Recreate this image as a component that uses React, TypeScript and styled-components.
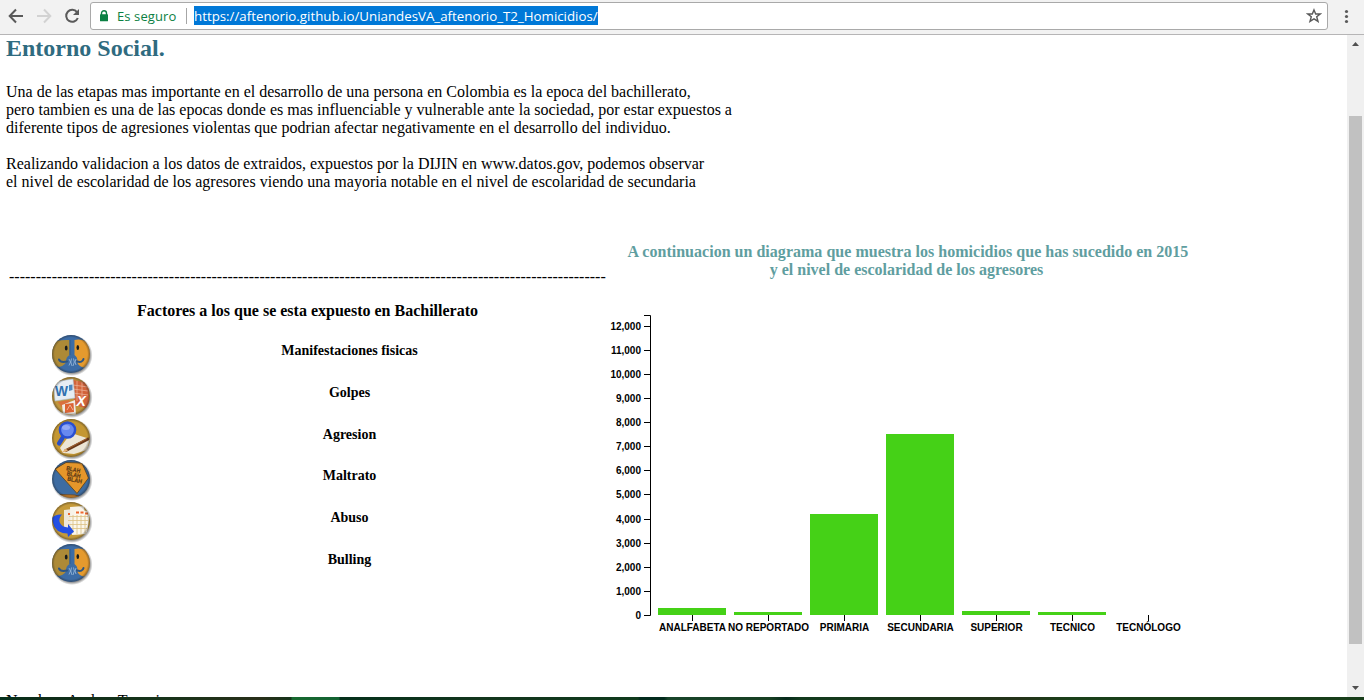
import React from "react";
import styled, { createGlobalStyle } from "styled-components";

const GlobalStyle = createGlobalStyle`
  * { box-sizing: border-box; }
  body { margin: 0; background: #fff; overflow: hidden; }
`;

const Window = styled.div`
  width: 1364px;
  height: 700px;
  display: flex;
  flex-direction: column;
  background: #fff;
  overflow: hidden;
`;

const Toolbar = styled.header`
  height: 35px;
  flex: none;
  display: flex;
  align-items: flex-start;
  background: #f2f2f2;
  border-bottom: 1px solid #b6b5b6;
`;

const NavIcons = styled.svg`
  width: 90px;
  height: 34px;
  flex: none;
`;

const AddressBar = styled.div`
  width: 1238px;
  height: 28px;
  margin-top: 2px;
  flex: none;
  display: flex;
  align-items: center;
  background: #fff;
  border: 1px solid #a9a9a9;
  border-radius: 3px;
  padding-left: 8px;
  font-family: "Open Sans", "Noto Sans", sans-serif;
  font-size: 13px;
`;

const LockIcon = styled.svg`
  width: 10px;
  height: 14px;
  flex: none;
`;

const Secure = styled.span`
  width: 60px;
  margin-left: 8px;
  color: #0b8043;
  line-height: 18px;
  white-space: nowrap;
  letter-spacing: 0.1px;
`;

const Divider = styled.span`
  width: 1px;
  height: 16px;
  margin-left: 9px;
  background: #a6a6a6;
`;

const Url = styled.span`
  width: 404px;
  height: 19px;
  margin-left: 7px;
  margin-top: -1px;
  line-height: 20px;
  background: #0078d7;
  color: #fff;
  white-space: nowrap;
  font-size: 13.3px;
`;

const StarIcon = styled.svg`
  width: 16px;
  height: 16px;
  margin-left: auto;
  margin-right: 5px;
`;

const MenuIcon = styled.svg`
  width: 36px;
  height: 34px;
`;

const Viewport = styled.div`
  height: 662px;
  flex: none;
  display: flex;
`;

const Page = styled.main`
  width: 1347px;
  height: 662px;
  overflow: hidden;
  padding: 0 6px;
  font-family: "Liberation Serif", "Times New Roman", serif;
  font-size: 16px;
  line-height: 18px;
  color: #000;
`;

const Title = styled.h2`
  margin: 0;
  font-size: 24px;
  line-height: 27px;
  color: #2f6b80;
`;

const Intro = styled.div`
  margin-top: 21px;
  height: 108px;
`;

const Line = styled.div<{ $track?: number }>`
  height: 18px;
  white-space: nowrap;
  letter-spacing: ${(p) => p.$track ?? 0}px;
`;

const Columns = styled.div`
  display: flex;
  margin-top: 52px;
  height: 449px;
`;

const Factors = styled.section`
  width: 600px;
  flex: none;
`;

const Rule = styled.div`
  height: 18px;
  margin: 25px 0 0 3px;
  white-space: nowrap;
  overflow: hidden;
`;

const FactorsTitle = styled.h4`
  width: 595px;
  margin: 16px 0 0 4px;
  height: 18px;
  text-align: center;
`;

const FactorList = styled.div`
  margin-top: 14px;
  padding-left: 45px;
`;

const Factor = styled.div`
  display: flex;
  height: 41.8px;
`;

const Badge = styled.svg`
  width: 42px;
  height: 42px;
  flex: none;
`;

const FactorName = styled.div`
  width: 516px;
  padding-top: 9px;
  text-align: center;
  font-size: 14px;
  font-weight: bold;
  line-height: 16px;
`;

const ChartSection = styled.section`
  width: 600px;
`;

const ChartTitle = styled.h4`
  margin: 0 0 0 1px;
  height: 36px;
  text-align: center;
  color: #5f9ea0;
`;

const Lead = styled(Line)`
  padding-left: 3px;
`;

const Chart = styled.svg`
  display: block;
  width: 600px;
  height: 340px;
  margin: 21px 0 0 -6px;
  font: bold 10px "Liberation Sans", Arial, sans-serif;
`;

const Scrollbar = styled.div`
  width: 17px;
  background: #f0f0f0;
  display: flex;
  flex-direction: column;
  align-items: center;
`;

const ScrollArrow = styled.svg`
  width: 17px;
  height: 17px;
  flex: none;
`;

const ScrollTrack = styled.div`
  flex: 1;
  width: 13px;
  padding-top: 64px;
`;

const ScrollThumb = styled.div`
  height: 528px;
  background: #c1c1c1;
`;

const Desktop = styled.div`
  height: 3px;
  flex: none;
  background: linear-gradient(
    90deg,
    #04301b 0, #0d2c18 40px, #16331a 160px, #282f19 260px, #16331a 291px,
    #17692f 292px, #136232 339px, #04301b 340px, #12351c 480px, #0f3a1c 638px,
    #022a1c 640px, #022a1c 664px, #18442a 668px, #173f22 770px, #062a1b 786px,
    #113a1c 800px, #243319 1020px, #1a4019 1070px, #173d19 1364px
  );
`;

function Disc({ id, fill, children }: { id: string; fill: string; children: React.ReactNode }) {
  return (
    <Badge viewBox="0 0 42 42">
      <defs>
        <clipPath id={id}><circle cx="20" cy="20" r="19" /></clipPath>
        <radialGradient id={`${id}s`}>
          <stop offset="0.84" stopColor="#000" stopOpacity="0.5" />
          <stop offset="1" stopColor="#000" stopOpacity="0" />
        </radialGradient>
        <radialGradient id={`${id}r`}>
          <stop offset="0.86" stopColor="#222" stopOpacity="0" />
          <stop offset="1" stopColor="#222" stopOpacity="0.45" />
        </radialGradient>
      </defs>
      <circle cx="21" cy="21.4" r="20.6" fill={`url(#${id}s)`} />
      <g clipPath={`url(#${id})`}>
        <rect width="42" height="42" fill={fill} />
        {children}
        <circle cx="20" cy="20" r="19" fill={`url(#${id}r)`} />
      </g>
    </Badge>
  );
}

function Faces({ id }: { id: string }) {
  return (
    <Disc id={id} fill="#3c6ca6">
      <path d="M0 10Q4 5.5 18.5 6V21Q15 23 15 27Q15 31 8 33L0 30Z" fill="#ad8a37" />
      <path d="M23.5 6Q32 4 42 11V30Q36 35 31 33Q26 31 26.5 27Q26.5 23 23.5 21Z" fill="#e59a2e" />
      <path d="M19 6V21" stroke="#2f5a90" strokeWidth="1" />
      <path d="M8 25.5Q9.5 29 16 27.5M32.5 25Q31.5 29 26 27.5" fill="none" stroke="#2d5583" strokeWidth="2" strokeLinecap="round" />
      <ellipse cx="15.2" cy="14" rx="1.4" ry="2.5" fill="#171a1c" />
      <ellipse cx="26.8" cy="13.5" rx="1.3" ry="2.5" fill="#171a1c" />
      <path d="M18 25L19.5 28L18 31.5M20.5 24.5L19.8 28L21 32M22.5 24.5L23.3 28L22 32M25 25L24 28L25 31" fill="none" stroke="#a9c6e2" strokeWidth="0.7" />
    </Disc>
  );
}

function Documents() {
  return (
    <Disc id="docs" fill="#c1953b">
      <path d="M22 4L38 7L38 33L23 29Z" fill="#d2643a" />
      <path d="M22 9L37 11M22 13L37 15M22 17L37 19M26 5V25M31 6V26" stroke="#efb89d" strokeWidth="0.7" />
      <path d="M2 6L22 3L24 22L4 25Z" fill="#e6edf3" stroke="#a9bed0" strokeWidth="0.6" />
      <text x="4" y="19.5" fontFamily="Liberation Sans, Arial, sans-serif" fontSize="15" fontWeight="bold" fill="#2f70af" textLength="13" lengthAdjust="spacingAndGlyphs">W</text>
      <path d="M18 9L21.5 8.5V14L18 15Z" fill="#4e88bf" />
      <path d="M7 26L18 24L20 29L12 33Z" fill="#d9703e" />
      <path d="M11 29L24 24L25 39L12 38Z" fill="#f0eae2" />
      <path d="M14 28L22.5 27L23 36L14 37Z" fill="#dc6333" />
      <path d="M16 34L19 29L22 34" fill="none" stroke="#ebb49b" />
      <text x="25.5" y="29.5" fontFamily="Liberation Sans, Arial, sans-serif" fontSize="14" fontWeight="bold" fontStyle="italic" fill="#fff">X</text>
    </Disc>
  );
}

function Magnifier() {
  return (
    <Disc id="lens" fill="#c49732">
      <path d="M9 30L20 15L39 21L36 32L23 36L12 35Z" fill="#ece6d6" />
      <path d="M14 33L38 20.5" stroke="#683718" strokeWidth="3" />
      <path d="M16 31.2L36 20.5" stroke="#b26f39" strokeWidth="0.8" />
      <path d="M10 35L15 30.5L17 33Z" fill="#e5b276" />
      <path d="M11.5 20L8 25.5" stroke="#294fc6" strokeWidth="4.2" strokeLinecap="round" />
      <circle cx="16.5" cy="12" r="7.6" fill="#6788ef" stroke="#2a4fd0" strokeWidth="2.5" />
      <ellipse cx="15" cy="9.5" rx="4" ry="2.5" fill="#a6b8fa" opacity="0.7" />
    </Disc>
  );
}

function Blah() {
  return (
    <Disc id="blah" fill="#3d6ca2">
      <path d="M4 10L15 3.5L31 4L37.5 19L26 34.5Z" fill="#e5962a" stroke="#624d2b" strokeWidth="1" />
      <path d="M6 35.5L24 36L31 38L26 42H8Z" fill="#d68525" stroke="#6b4d2c" />
      <g transform="rotate(12 22 12)" fontFamily="Liberation Sans, Arial, sans-serif" fontSize="6" fontWeight="bold" fill="#5c3a16" stroke="#5c3a16" strokeWidth="0.2">
        <text x="15" y="12.5" textLength="14" lengthAdjust="spacingAndGlyphs">BLAH</text>
        <text x="16.5" y="17.5" textLength="14" lengthAdjust="spacingAndGlyphs">BLAH</text>
        <text x="18" y="22.5" textLength="15" lengthAdjust="spacingAndGlyphs">BLAH</text>
      </g>
    </Disc>
  );
}

function Calendar() {
  return (
    <Disc id="cal" fill="#c59a39">
      <path d="M13 9L22 8L24 31L13 28Z" fill="#eee8dc" />
      <path d="M19 6L33 5L36 31L20 33Z" fill="#f7f3e9" />
      <path d="M24 9L39 10L36 33L21 34Z" fill="#fbf7ec" />
      <path d="M22 14V32M26 14V33M30 14V33M34 14V32M18 15.5H37M17 19.5H37M17 23.5H36M18 27.5H36" stroke="#dcc084" strokeWidth="0.8" />
      <path d="M25 11.5H28M29.5 11.5H32.5M34 12.5H37M17 13H19" stroke="#ef672d" strokeWidth="2" />
      <path d="M1 17Q4 13 11 13.5Q7 18 9 22Q11 26 17 26.5L17 23L23 30.5L17 36L16.5 32.5Q4 32 2 22Z" fill="#2450e4" />
    </Disc>
  );
}

const factors = [
  { name: "Manifestaciones fisicas", icon: <Faces id="face1" /> },
  { name: "Golpes", icon: <Documents /> },
  { name: "Agresion", icon: <Magnifier /> },
  { name: "Maltrato", icon: <Blah /> },
  { name: "Abuso", icon: <Calendar /> },
  { name: "Bulling", icon: <Faces id="face2" /> },
];

const ticks = [615, 591, 567, 543, 519, 494, 470, 446, 422, 398, 374, 350, 326];

const bars = [
  { label: "ANALFABETA", height: 7 },
  { label: "NO REPORTADO", height: 3 },
  { label: "PRIMARIA", height: 101 },
  { label: "SECUNDARIA", height: 181 },
  { label: "SUPERIOR", height: 4 },
  { label: "TECNICO", height: 3 },
  { label: "TECNÓLOGO", height: 0 },
];

function BarChart() {
  return (
    <Chart viewBox="600 300 600 340">
      <path d="M644 315.5H650.5V615.5H644" fill="none" stroke="#000" />
      {ticks.map((y, i) => (
        <g key={y}>
          <path d={`M644 ${y + 0.5}H650`} stroke="#000" />
          <text x="641" y={y + 4} textAnchor="end">{(i * 1000).toLocaleString("en-US")}</text>
        </g>
      ))}
      {bars.map((b, i) => (
        <g key={b.label}>
          <rect x={658 + i * 76} y={615 - b.height} width="68" height={b.height} fill="#45d117" />
          <path d={`M${692.5 + i * 76} 615V621`} stroke="#000" />
          <text x={692.5 + i * 76} y="631" textAnchor="middle">{b.label}</text>
        </g>
      ))}
    </Chart>
  );
}

export default function App() {
  return (
    <Window>
      <GlobalStyle />
      <Toolbar>
        <NavIcons viewBox="0 0 90 34" fill="none" strokeWidth="2">
          <path d="M23 16H10M16 9.5L9.7 16L16 22.5" stroke="#5a5a5a" />
          <path d="M37 16H50M44 9.5L50.3 16L44 22.5" stroke="#d2d2d2" />
          <path d="M77 12.2A6 6 0 1 0 77.8 18" stroke="#5a5a5a" />
          <path d="M79 9V15H73Z" fill="#5a5a5a" />
        </NavIcons>
        <AddressBar>
          <LockIcon viewBox="0 0 10 14">
            <path d="M2.5 6V4.2a2.5 2.5 0 0 1 5 0V6" fill="none" stroke="#0b8043" strokeWidth="1.4" />
            <rect x="1" y="5.3" width="8" height="7" rx="0.6" fill="#0b8043" />
          </LockIcon>
          <Secure>Es seguro</Secure>
          <Divider />
          <Url>https://aftenorio.github.io/UniandesVA_aftenorio_T2_Homicidios/</Url>
          <StarIcon viewBox="0 0 16 16">
            <path d="M8 1.9L9.7 6H14.2L10.7 8.8L12 13.4L8 10.8L4 13.4L5.3 8.8L1.8 6H6.3Z" fill="none" stroke="#5a5a5a" strokeWidth="1.4" />
          </StarIcon>
        </AddressBar>
        <MenuIcon viewBox="0 0 36 34" fill="#5a5a5a">
          <circle cx="18.5" cy="11.5" r="1.6" />
          <circle cx="18.5" cy="16.5" r="1.6" />
          <circle cx="18.5" cy="21.5" r="1.6" />
        </MenuIcon>
      </Toolbar>
      <Viewport>
        <Page>
          <Title>Entorno Social.</Title>
          <Intro>
            <Line>Una de las etapas mas importante en el desarrollo de una persona en Colombia es la epoca del bachillerato,</Line>
            <Line>pero tambien es una de las epocas donde es mas influenciable y vulnerable ante la sociedad, por estar expuestos a</Line>
            <Line>diferente tipos de agresiones violentas que podrian afectar negativamente en el desarrollo del individuo.</Line>
            <Line />
            <Line>Realizando validacion a los datos de extraidos, expuestos por la DIJIN en www.datos.gov, podemos observar</Line>
            <Line>el nivel de escolaridad de los agresores viendo una mayoria notable en el nivel de escolaridad de secundaria</Line>
          </Intro>
          <Columns>
            <Factors>
              <Rule>{"-".repeat(112)}</Rule>
              <FactorsTitle>Factores a los que se esta expuesto en Bachillerato</FactorsTitle>
              <FactorList>
                {factors.map((f) => (
                  <Factor key={f.name}>
                    {f.icon}
                    <FactorName>{f.name}</FactorName>
                  </Factor>
                ))}
              </FactorList>
            </Factors>
            <ChartSection>
              <ChartTitle>
                <Lead $track={0.02}>A continuacion un diagrama que muestra los homicidios que has sucedido en 2015</Lead>
                <Line>y el nivel de escolaridad de los agresores</Line>
              </ChartTitle>
              <BarChart />
            </ChartSection>
          </Columns>
          <Line $track={0.12}>Nombre: Andres Tenorio</Line>
        </Page>
        <Scrollbar>
          <ScrollArrow viewBox="0 0 17 17"><path d="M5 11H12L8.5 7Z" fill="#505050" /></ScrollArrow>
          <ScrollTrack><ScrollThumb /></ScrollTrack>
          <ScrollArrow viewBox="0 0 17 17"><path d="M5 6H12L8.5 10Z" fill="#505050" /></ScrollArrow>
        </Scrollbar>
      </Viewport>
      <Desktop />
    </Window>
  );
}
